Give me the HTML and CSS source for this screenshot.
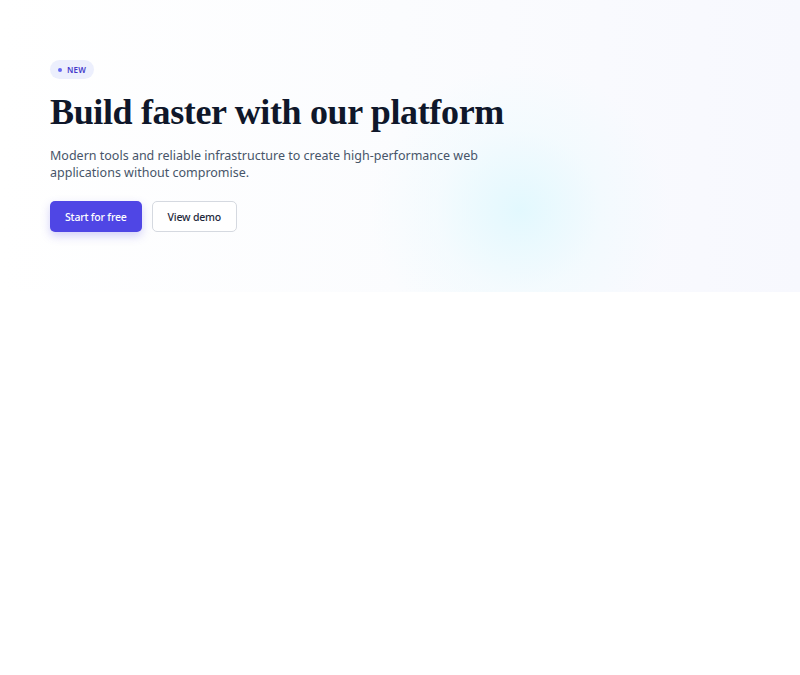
FILE: index.html
```html
<!DOCTYPE html>
<html lang="en">
<head>
<meta charset="utf-8">
<title>Build faster</title>
<link rel="stylesheet" href="styles.css">
</head>
<body>
<section class="hero">
  <div class="glow"></div>
  <div class="content">
    <span class="badge"><span class="dot"></span>NEW</span>
    <h1 class="title">Build faster with our platform</h1>
    <p class="lead">Modern tools and reliable infrastructure to create high-performance web applications without compromise.</p>
    <div class="actions">
      <a class="btn btn-primary" href="#">Start for free</a>
      <a class="btn btn-secondary" href="#">View demo</a>
    </div>
  </div>
</section>
</body>
</html>
```
FILE: styles.css
```css
* { box-sizing: border-box; }
html, body { margin: 0; padding: 0; background: #ffffff; }
body { font-family: "Noto Sans", "Open Sans", sans-serif; }

.hero {
  position: relative;
  overflow: hidden;
  height: 292px;
  background: linear-gradient(90deg, #ffffff 0%, #fbfcfe 50%, #f7f8fe 100%);
  padding: 60px 50px 0;
}
.glow {
  position: absolute;
  left: 370px;
  top: 65px;
  width: 300px;
  height: 290px;
  border-radius: 50%;
  background: radial-gradient(closest-side, rgba(224, 248, 254, 0.9), rgba(236, 250, 254, 0.45) 55%, rgba(255,255,255,0) 100%);
  pointer-events: none;
}
.content { position: relative; display: flex; flex-direction: column; align-items: flex-start; }

.badge {
  display: inline-flex;
  align-items: center;
  gap: 5px;
  height: 19px;
  padding: 0 8px;
  border-radius: 10px;
  background: #eceffd;
  color: #4338ca;
  font-size: 8px;
  font-weight: 600;
  letter-spacing: 0.02em;
}
.dot { width: 4px; height: 4px; border-radius: 50%; background: #6366f1; }

.title {
  margin: 13px 0 0;
  font-family: "Liberation Serif", "Times New Roman", serif;
  font-weight: 700;
  font-size: 36px;
  line-height: 40px;
  letter-spacing: -0.01em;
  color: #0f172a;
}
.lead {
  margin: 15px 0 0;
  max-width: 460px;
  font-size: 12.5px;
  line-height: 17px;
  color: #475569;
}
.actions { display: flex; gap: 10px; margin-top: 20px; }
.btn {
  display: inline-flex;
  align-items: center;
  justify-content: center;
  height: 31px;
  padding: 0 15px;
  border-radius: 5px;
  font-size: 10.5px;
  letter-spacing: -0.2px;
  font-weight: 500;
  text-decoration: none;
}
.btn-primary {
  background: #4f46e5;
  color: #ffffff;
  box-shadow: 0 4px 10px rgba(79, 70, 229, 0.25);
}
.btn-secondary {
  background: #ffffff;
  color: #1e293b;
  border: 1px solid #d5d9e0;
}
```
